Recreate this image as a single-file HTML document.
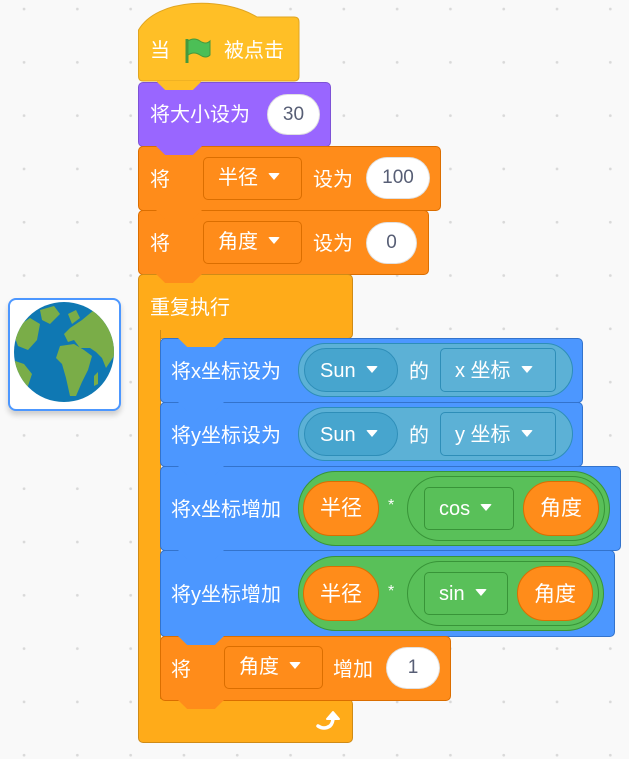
<!DOCTYPE html>
<html><head><meta charset="utf-8"><style>
body{margin:0;width:629px;height:759px;overflow:hidden;background-color:#f9f9f9;
background-image:radial-gradient(circle,#d9d9d9 1.2px,transparent 1.6px);background-size:53.3px 53.3px;background-position:-2.6px -17.6px;
font-family:"Liberation Sans","Noto Sans CJK SC",sans-serif;position:relative}
.b{position:absolute;border-radius:5px;box-sizing:border-box;}
.t{position:absolute;color:#fff;font-size:20px;line-height:24px;white-space:nowrap}
.tab{position:absolute;height:9px;width:46px;z-index:5;box-sizing:border-box;clip-path:polygon(0 0,100% 0,80% 100%,20% 100%);margin-left:2px}
.ov{position:absolute;background:#fff;border-radius:22px;color:#575e75;font-size:19px;text-align:center;box-sizing:border-box;border:1px solid rgba(0,0,0,.12)}
.dd{position:absolute;border-radius:5px;box-sizing:border-box;color:#fff;font-size:20px;white-space:nowrap}
.tri{display:inline-block;width:0;height:0;border-left:6px solid transparent;border-right:6px solid transparent;border-top:7px solid #fff;border-radius:2px;vertical-align:middle;margin-left:10px;position:relative;top:-2px}
.y{background:#FFBF26;border:1px solid #E0A520}
.p{background:#9966FF;border:1px solid #7E52D6}
.o{background:#FF8C1A;border:1px solid #DB6E00}
.c{background:#FFAB19;border:1px solid #CF8B17}
.bl{background:#4C97FF;border:1px solid #3373CC}
.sn{background:#5CB1D6;border:1.5px solid #2E8EB8}
.snd{background:#47A5CE;border:1px solid #2E8EB8}
.g{background:#59C059;border:1.5px solid #389438}
.or{background:#FF8C1A;border:1px solid #DB6E00;border-radius:30px}
</style></head><body>

<!-- sprite -->
<div style="position:absolute;left:8px;top:298px;width:113px;height:113px;background:#fff;border:2px solid #4C97FF;border-radius:8px;box-sizing:border-box;box-shadow:0 4px 6px rgba(0,0,0,.18)">
<svg width="109" height="109" viewBox="0 0 109 109" style="position:absolute;left:0;top:0">
<defs><clipPath id="cp"><circle cx="54" cy="52" r="50"/></clipPath></defs>
<circle cx="54" cy="52" r="50" fill="#0F78B3"/>
<g clip-path="url(#cp)" fill="#7AAD48">
<path d="M2 30 L20 18 L30 24 L27 40 L18 50 L8 46 Z"/>
<path d="M30 10 L44 6 L50 14 L40 24 L32 20 Z"/>
<path d="M58 14 L66 10 L70 18 L62 24 Z"/>
<path d="M60 28 L72 20 L84 10 L104 14 L110 40 L104 56 L96 68 L92 58 L86 52 L80 48 L70 48 L64 40 L58 42 L54 34 Z"/>
<path d="M50 46 L64 44 L74 50 L82 56 L78 70 L72 82 L66 96 L60 96 L56 78 L52 64 L46 58 Z"/>
<path d="M2 60 L14 64 L22 74 L16 92 L6 100 L0 90 Z"/>
<path d="M84 76 L88 72 L88 84 L84 86 Z"/>
</g></svg></div>

<!-- hat -->
<svg style="position:absolute;left:137px;top:0" width="164" height="82"><path d="M1.5 30 C20 -2 85 -4 120 17 L157 17 Q162 17 162 22 L162 76 Q162 81 157 81 L6 81 Q1.5 81 1.5 76 Z" fill="#FFBF26" stroke="#E0A520"/></svg>
<div class="t" style="left:150px;top:39px">当</div>
<svg style="position:absolute;left:184px;top:37px" width="30" height="28"><path d="M3 2 V26" stroke="#45993d" stroke-width="3"/><path d="M4 4 Q10 0 16 4 Q22 8 26 4 V18 Q22 22 16 18 Q10 14 4 18 Z" fill="#4CBF56" stroke="#45993d"/></svg>
<div class="t" style="left:224px;top:39px">被点击</div>
<div class="tab" style="left:154px;top:81px;background:#FFBF26"></div>

<!-- purple -->
<div class="b p" style="left:138px;top:82px;width:193px;height:65px"></div>
<div class="t" style="left:150px;top:103px">将大小设为</div>
<div class="ov" style="left:267px;top:94px;width:53px;height:41px;line-height:39px">30</div>
<div class="tab" style="left:154px;top:146px;background:#9966FF"></div>

<!-- set radius -->
<div class="b o" style="left:138px;top:146px;width:303px;height:65px"></div>
<div class="t" style="left:150px;top:168px">将</div>
<div class="dd o" style="left:203px;top:157px;width:99px;height:43px;line-height:41px;padding-left:14px">半径<span class="tri"></span></div>
<div class="t" style="left:313px;top:168px">设为</div>
<div class="ov" style="left:366px;top:157px;width:64px;height:42px;line-height:40px">100</div>
<div class="tab" style="left:154px;top:210px;background:#FF8C1A"></div>

<!-- set angle -->
<div class="b o" style="left:138px;top:210px;width:291px;height:65px"></div>
<div class="t" style="left:150px;top:232px">将</div>
<div class="dd o" style="left:203px;top:221px;width:99px;height:43px;line-height:41px;padding-left:14px">角度<span class="tri"></span></div>
<div class="t" style="left:313px;top:232px">设为</div>
<div class="ov" style="left:366px;top:222px;width:51px;height:42px;line-height:40px">0</div>
<div class="tab" style="left:154px;top:274px;background:#FF8C1A"></div>

<!-- repeat -->
<div class="b c" style="left:138px;top:274px;width:215px;height:65px;border-bottom-left-radius:0"></div>
<div class="b c" style="left:138px;top:330px;width:23px;height:380px;border-radius:0;border-top:none;border-bottom:none"></div>
<div class="b c" style="left:138px;top:699px;width:215px;height:44px;border-top:none;border-top-left-radius:0"></div>
<div class="t" style="left:150px;top:296px">重复执行</div>
<svg style="position:absolute;left:314px;top:710px" width="28" height="24"><path d="M4 16 Q10 20 16 16 Q19 13 19 8" stroke="#fff" stroke-width="3.5" fill="none" stroke-linecap="round"/><path d="M13 9 L19 2 L25 9 Z" fill="#fff" stroke="#fff" stroke-linejoin="round" stroke-width="2"/></svg>
<div class="tab" style="left:176px;top:338px;background:#FFAB19"></div>

<!-- set x -->
<div class="b bl" style="left:160px;top:338px;width:423px;height:65px"></div>
<div class="t" style="left:171px;top:360px">将x坐标设为</div>
<div class="b sn" style="left:298px;top:343px;width:275px;height:54px;border-radius:27px"></div>
<div class="dd snd" style="left:304px;top:348px;width:94px;height:44px;border-radius:22px;line-height:44px;padding-left:15px">Sun<span class="tri"></span></div>
<div class="t" style="left:409px;top:360px">的</div>
<div class="dd snd" style="left:440px;top:348px;width:116px;height:44px;line-height:44px;padding-left:14px;background:#5CB1D6">x 坐标<span class="tri"></span></div>
<div class="tab" style="left:176px;top:402px;background:#4C97FF"></div>

<!-- set y -->
<div class="b bl" style="left:160px;top:402px;width:423px;height:65px"></div>
<div class="t" style="left:171px;top:424px">将y坐标设为</div>
<div class="b sn" style="left:298px;top:407px;width:275px;height:54px;border-radius:27px"></div>
<div class="dd snd" style="left:304px;top:412px;width:94px;height:44px;border-radius:22px;line-height:44px;padding-left:15px">Sun<span class="tri"></span></div>
<div class="t" style="left:409px;top:424px">的</div>
<div class="dd snd" style="left:440px;top:412px;width:116px;height:44px;line-height:44px;padding-left:14px;background:#5CB1D6">y 坐标<span class="tri"></span></div>
<div class="tab" style="left:176px;top:466px;background:#4C97FF"></div>

<!-- change x -->
<div class="b bl" style="left:160px;top:466px;width:461px;height:85px"></div>
<div class="t" style="left:171px;top:498px">将x坐标增加</div>
<div class="b g" style="left:298px;top:471px;width:312px;height:75px;border-radius:38px"></div>
<div class="b or" style="left:303px;top:481px;width:76px;height:55px"></div>
<div class="t" style="left:320px;top:497px;font-size:21px">半径</div>
<div class="t" style="left:388px;top:494px;font-size:16px">*</div>
<div class="b g" style="left:407px;top:476px;width:198px;height:65px;border-radius:33px"></div>
<div class="dd g" style="left:424px;top:487px;width:90px;height:43px;line-height:43px;padding-left:14px;border-radius:5px">cos<span class="tri"></span></div>
<div class="b or" style="left:523px;top:481px;width:76px;height:55px"></div>
<div class="t" style="left:540px;top:497px;font-size:21px">角度</div>
<div class="tab" style="left:176px;top:550px;background:#4C97FF"></div>

<!-- change y -->
<div class="b bl" style="left:160px;top:550px;width:455px;height:87px"></div>
<div class="t" style="left:171px;top:583px">将y坐标增加</div>
<div class="b g" style="left:298px;top:556px;width:306px;height:75px;border-radius:38px"></div>
<div class="b or" style="left:303px;top:566px;width:76px;height:55px"></div>
<div class="t" style="left:320px;top:583px;font-size:21px">半径</div>
<div class="t" style="left:388px;top:580px;font-size:16px">*</div>
<div class="b g" style="left:407px;top:561px;width:192px;height:65px;border-radius:33px"></div>
<div class="dd g" style="left:424px;top:572px;width:84px;height:43px;line-height:43px;padding-left:14px;border-radius:5px">sin<span class="tri"></span></div>
<div class="b or" style="left:517px;top:566px;width:76px;height:55px"></div>
<div class="t" style="left:534px;top:583px;font-size:21px">角度</div>
<div class="tab" style="left:176px;top:636px;background:#4C97FF"></div>

<!-- change angle -->
<div class="b o" style="left:160px;top:636px;width:291px;height:65px"></div>
<div class="t" style="left:171px;top:658px">将</div>
<div class="dd o" style="left:224px;top:646px;width:99px;height:43px;line-height:41px;padding-left:14px">角度<span class="tri"></span></div>
<div class="t" style="left:333px;top:658px">增加</div>
<div class="ov" style="left:386px;top:647px;width:54px;height:42px;line-height:40px">1</div>
<div class="tab" style="left:176px;top:700px;background:#FF8C1A"></div>

</body></html>
